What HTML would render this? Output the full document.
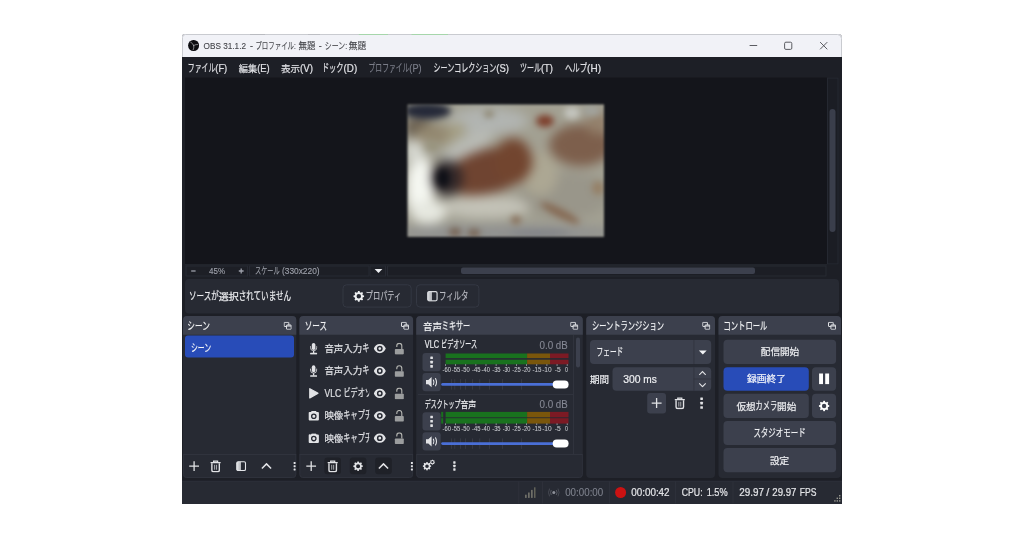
<!DOCTYPE html>
<html lang="ja"><head><meta charset="utf-8"><title>OBS 31.1.2</title>
<style>html,body{margin:0;padding:0;background:#fff;}body{width:1024px;height:538px;overflow:hidden;}svg.root{display:block;filter:blur(0.4px);font-family:'Liberation Sans','Noto Sans CJK JP',sans-serif;white-space:pre;}</style></head>
<body>
<svg class="root" width="1024" height="538" viewBox="0 0 1024 538">
<path d="M185 34H838A4 4 0 0 1 842 38V504H182V37A3 3 0 0 1 185 34Z" fill="#1d1f26"/>
<path d="M185 34H838A4 4 0 0 1 842 38V57H182V37A3 3 0 0 1 185 34Z" fill="#f1f2f7"/>
<path d="M182.5 57V37.5A3 3 0 0 1 185.5 34.5H837.5A4 4 0 0 1 841.5 38.5V57" fill="none" stroke="#c9cbd0"/>
<rect x="358.8" y="34" width="29.2" height="1" fill="#a6d6ab"/>
<rect x="411.5" y="34" width="36.5" height="1" fill="#a6d6ab"/>
<rect x="250" y="34" width="15" height="1" fill="#b9bbc0"/>
<rect x="308" y="34" width="12" height="1" fill="#bcbec3"/>
<svg x="188" y="39.9" width="11.2" height="11.2" viewBox="0 0 12 12"><circle cx="6" cy="6" r="5.9" fill="#0d0d10"/>
<g fill="none" stroke="#a9abae" stroke-width="1.05" stroke-linecap="round" stroke-opacity="0.85">
<path d="M6.1 6.2C5.4 4.6 4.6 3.4 3 2.6"/>
<path d="M6.1 6.2C7.4 5.2 8.6 4.9 10.2 5"/>
<path d="M6.1 6.2C6.4 7.8 6.2 9 5.6 10.4"/>
</g></svg>
<svg x="745" y="38" width="90" height="15" viewBox="0 0 90 15"><g fill="none" stroke="#4a4b50" stroke-width="0.9">
<path d="M4.6 7.5H12.2"/>
<rect x="39.6" y="4.2" width="7.2" height="7.2" rx="1.3"/>
<path d="M75.1 4.1L82.3 11.3M82.3 4.1L75.1 11.3"/>
</g></svg>
<rect x="185" y="77.6" width="642" height="186.8" fill="#14151b"/>
<svg x="401" y="98" width="210" height="146" viewBox="0 0 210 146"><defs><filter id="bl" color-interpolation-filters="sRGB" x="-30%" y="-30%" width="160%" height="160%"><feGaussianBlur stdDeviation="5.5"/></filter><filter id="bs" color-interpolation-filters="sRGB" x="-30%" y="-30%" width="160%" height="160%"><feGaussianBlur stdDeviation="3"/></filter><filter id="be" color-interpolation-filters="sRGB" x="-10%" y="-10%" width="120%" height="120%"><feGaussianBlur stdDeviation="1.2"/></filter><clipPath id="cp"><rect x="6.6" y="6.6" width="196.4" height="132.2"/></clipPath></defs><g filter="url(#be)"><g clip-path="url(#cp)"><rect x="0" y="0" width="210" height="146" fill="#a3a193"/><g filter="url(#bl)"><ellipse cx="104" cy="135" rx="120" ry="8" fill="#8f9090"/><ellipse cx="164" cy="97" rx="45" ry="24" fill="#99968a"/><ellipse cx="87" cy="23" rx="40" ry="13" fill="#b1b4b1"/><ellipse cx="67" cy="48" rx="28" ry="10" fill="#b8bab4" transform="rotate(-28 67 48)"/><ellipse cx="48" cy="36" rx="18" ry="8" fill="#a49e83" transform="rotate(-30 48 36)"/><ellipse cx="139" cy="76" rx="18" ry="22" fill="#aca793"/><ellipse cx="84" cy="109" rx="45" ry="11" fill="#c3c2b7"/><ellipse cx="19" cy="90" rx="14" ry="34" fill="#f5f7f1"/><ellipse cx="13" cy="54" rx="9" ry="14" fill="#d6d8d1"/><ellipse cx="27" cy="114" rx="18" ry="12" fill="#e6e8e0"/><ellipse cx="180" cy="47" rx="32" ry="21" fill="#7d5f4c"/><ellipse cx="197" cy="24" rx="12" ry="12" fill="#94816c"/><ellipse cx="88" cy="73" rx="45" ry="22" fill="#6f4431" transform="rotate(-15 88 73)"/><ellipse cx="112" cy="63" rx="19" ry="23" fill="#72452f"/><ellipse cx="18" cy="30" rx="14" ry="12" fill="#655a4c"/><ellipse cx="31" cy="36" rx="18" ry="10" fill="#938870"/><ellipse cx="46" cy="80" rx="16" ry="18" fill="#2b2528" fill-opacity="0.9"/></g><g filter="url(#bs)"><ellipse cx="26" cy="13" rx="24" ry="8" fill="#252938"/><ellipse cx="42" cy="80" rx="7" ry="10" fill="#0f1017"/><ellipse cx="144" cy="23" rx="9" ry="6" fill="#7c3d2a"/><ellipse cx="171" cy="15" rx="8" ry="6" fill="#c6c7c1"/><ellipse cx="191" cy="13" rx="9" ry="5" fill="#a2a49f"/><ellipse cx="88" cy="16" rx="5" ry="3.5" fill="#8a816b"/><ellipse cx="159" cy="115" rx="22" ry="4.5" fill="#866a54" transform="rotate(27 159 115)"/><ellipse cx="115" cy="122" rx="5" ry="4" fill="#856b54"/><ellipse cx="197" cy="90" rx="6" ry="7" fill="#958066"/><ellipse cx="54" cy="134" rx="6" ry="4" fill="#745d4c"/><ellipse cx="73" cy="135" rx="6" ry="4" fill="#77614f"/><ellipse cx="31" cy="48" rx="6" ry="5" fill="#98947e"/><ellipse cx="139" cy="135" rx="30" ry="3" fill="#808287"/></g></g></g></svg>
<rect x="827" y="77.6" width="11.5" height="186.8" fill="#1b1d24"/>
<rect x="827.5" y="78.1" width="10.5" height="185.8" fill="none" stroke="#252831"/>
<rect x="829.5" y="109" width="6" height="123" rx="3" fill="#3a3e4b"/>
<rect x="185" y="264.4" width="642" height="12.6" fill="#1d1f26"/>
<rect x="185" y="264.4" width="642" height="1" fill="#272a33"/>
<rect x="185.5" y="265.5" width="62.5" height="11" fill="#1d1f26"/>
<rect x="186" y="266" width="61.5" height="10" fill="none" stroke="#272a33"/>
<rect x="249" y="265.5" width="120.5" height="11" fill="#1d1f26"/>
<rect x="249.5" y="266" width="119.5" height="10" fill="none" stroke="#272a33"/>
<rect x="369.5" y="265.5" width="16.5" height="11" fill="#1d1f26"/>
<rect x="370" y="266" width="15.5" height="10" fill="none" stroke="#272a33"/>
<rect x="387" y="265.5" width="439.5" height="11" fill="#1c1e25"/>
<rect x="387.5" y="266" width="438.5" height="10" fill="none" stroke="#272a33"/>
<rect x="461" y="267.5" width="294" height="6.5" rx="2" fill="#3c404d"/>
<svg x="189" y="266" width="60" height="10" viewBox="0 0 60 10"><g stroke="#9da0aa" stroke-width="1.3" fill="none"><path d="M2.2 5H6.6"/><path d="M49.8 5H54.6M52.2 2.6V7.4"/></g></svg>
<svg x="374" y="268.3" width="9" height="6" viewBox="0 0 9 6"><path d="M0.6 0.8H8.4L4.5 4.8Z" fill="#eef0f3"/></svg>
<rect x="185" y="279" width="654" height="34.5" rx="4" fill="#272a33"/>
<rect x="342.5" y="284.3" width="69.2" height="23.3" rx="4" fill="#272a33"/>
<rect x="343" y="284.8" width="68.2" height="22.3" rx="3.5" fill="none" stroke="#343843"/>
<rect x="416" y="284.3" width="63.4" height="23.3" rx="4" fill="#272a33"/>
<rect x="416.5" y="284.8" width="62.4" height="22.3" rx="3.5" fill="none" stroke="#343843"/>
<svg x="353" y="290.5" width="11.6" height="11.6" viewBox="0 0 16 16"><path fill="#eef0f2" fill-rule="evenodd" d="M6.9 0.6h2.2l.35 1.75a5.8 5.8 0 0 1 1.45.6l1.5-1 1.55 1.55-1 1.5c.26.45.47.94.6 1.45l1.75.35v2.2l-1.75.35a5.8 5.8 0 0 1-.6 1.45l1 1.5-1.55 1.55-1.5-1c-.45.26-.94.47-1.45.6L9.1 15.4H6.9l-.35-1.75a5.8 5.8 0 0 1-1.45-.6l-1.5 1-1.55-1.55 1-1.5a5.8 5.8 0 0 1-.6-1.45L.7 9.1V6.9l1.75-.35c.13-.51.34-1 .6-1.45l-1-1.5L3.6 2.05l1.5 1c.45-.26.94-.47 1.45-.6Z M8 4.9a3.1 3.1 0 1 0 0 6.2 3.1 3.1 0 0 0 0-6.2Z"/></svg>
<svg x="426.8" y="290.6" width="11.2" height="11.2" viewBox="0 0 12 12"><defs><linearGradient id="fg1" x1="0" x2="1"><stop offset="0" stop-color="#d9dbdf"/><stop offset="0.45" stop-color="#d9dbdf" stop-opacity="0.75"/><stop offset="0.5" stop-color="#d9dbdf" stop-opacity="0"/></linearGradient></defs>
<rect x="1" y="1" width="10" height="10" rx="1.6" fill="url(#fg1)"/><rect x="1" y="1" width="10" height="10" rx="1.6" fill="none" stroke="#d9dbdf" stroke-width="1.3"/></svg>
<rect x="183" y="316" width="113.3" height="162" rx="4" fill="#272a33"/>
<path d="M187 316H292.3A4 4 0 0 1 296.3 320V334.7H183V320A4 4 0 0 1 187 316Z" fill="#3c404d"/>
<svg x="283.6" y="321.8" width="8.1" height="8" viewBox="0 0 8.1 8"><g fill="none" stroke="#e6e8eb" stroke-width="0.95"><rect x="0.5" y="0.5" width="4.7" height="4.2" rx="0.4"/><rect x="2.9" y="3.2" width="4.7" height="4.3" rx="0.4" fill="#3c404d"/><path d="M2.9 4.2H7.6" stroke-width="1.1"/></g></svg>
<rect x="299.4" y="316" width="113.7" height="162" rx="4" fill="#272a33"/>
<path d="M303.4 316H409.1A4 4 0 0 1 413.1 320V334.7H299.4V320A4 4 0 0 1 303.4 316Z" fill="#3c404d"/>
<svg x="401" y="321.8" width="8.1" height="8" viewBox="0 0 8.1 8"><g fill="none" stroke="#e6e8eb" stroke-width="0.95"><rect x="0.5" y="0.5" width="4.7" height="4.2" rx="0.4"/><rect x="2.9" y="3.2" width="4.7" height="4.3" rx="0.4" fill="#3c404d"/><path d="M2.9 4.2H7.6" stroke-width="1.1"/></g></svg>
<rect x="416.2" y="316" width="166.6" height="162" rx="4" fill="#272a33"/>
<path d="M420.2 316H578.8A4 4 0 0 1 582.8 320V334.7H416.2V320A4 4 0 0 1 420.2 316Z" fill="#3c404d"/>
<svg x="570.2" y="321.8" width="8.1" height="8" viewBox="0 0 8.1 8"><g fill="none" stroke="#e6e8eb" stroke-width="0.95"><rect x="0.5" y="0.5" width="4.7" height="4.2" rx="0.4"/><rect x="2.9" y="3.2" width="4.7" height="4.3" rx="0.4" fill="#3c404d"/><path d="M2.9 4.2H7.6" stroke-width="1.1"/></g></svg>
<rect x="586.2" y="316" width="128.8" height="162" rx="4" fill="#272a33"/>
<path d="M590.2 316H711A4 4 0 0 1 715 320V334.7H586.2V320A4 4 0 0 1 590.2 316Z" fill="#3c404d"/>
<svg x="702.2" y="321.8" width="8.1" height="8" viewBox="0 0 8.1 8"><g fill="none" stroke="#e6e8eb" stroke-width="0.95"><rect x="0.5" y="0.5" width="4.7" height="4.2" rx="0.4"/><rect x="2.9" y="3.2" width="4.7" height="4.3" rx="0.4" fill="#3c404d"/><path d="M2.9 4.2H7.6" stroke-width="1.1"/></g></svg>
<rect x="718.5" y="316" width="122.5" height="162" rx="4" fill="#272a33"/>
<path d="M722.5 316H837A4 4 0 0 1 841 320V334.7H718.5V320A4 4 0 0 1 722.5 316Z" fill="#3c404d"/>
<svg x="828" y="321.8" width="8.1" height="8" viewBox="0 0 8.1 8"><g fill="none" stroke="#e6e8eb" stroke-width="0.95"><rect x="0.5" y="0.5" width="4.7" height="4.2" rx="0.4"/><rect x="2.9" y="3.2" width="4.7" height="4.3" rx="0.4" fill="#3c404d"/><path d="M2.9 4.2H7.6" stroke-width="1.1"/></g></svg>
<rect x="185" y="335.6" width="109" height="22" rx="3" fill="#284cb8"/>
<rect x="183" y="454" width="113.3" height="1" fill="#30333d"/>
<path d="M183.5 455V474.5A3 3 0 0 0 186.5 477.5H292.8A3 3 0 0 0 295.8 474.5V455" fill="none" stroke="#2e313b"/>
<path d="M299.9 455V474.5A3 3 0 0 0 302.9 477.5H409.6A3 3 0 0 0 412.6 474.5V455" fill="none" stroke="#2e313b"/>
<path d="M416.7 455V474.5A3 3 0 0 0 419.7 477.5H579.3A3 3 0 0 0 582.3 474.5V455" fill="none" stroke="#2e313b"/>
<svg x="188.8" y="460.9" width="10.6" height="10.6" viewBox="0 0 10.6 10.6"><path d="M5.3 0.4V10.2M0.4 5.3H10.2" stroke="#e2e3e6" stroke-width="1.3" fill="none"/></svg>
<svg x="209.7" y="459.9" width="11.8" height="12.8" viewBox="0 0 11 12"><g fill="none" stroke="#e2e3e6"><path d="M0.8 2.6H10.2" stroke-width="1.3"/><path d="M3.6 2.2V1.2H7.4V2.2" stroke-width="1.1"/><path d="M2 3.2V9.6Q2 11 3.4 11H7.6Q9 11 9 9.6V3.2" stroke-width="1.3"/><path d="M4.6 4.6V9.2M6.4 4.6V9.2" stroke-width="0.9" stroke-opacity="0.75"/></g></svg>
<svg x="235.9" y="460.9" width="10.5" height="10.5" viewBox="0 0 12 12"><defs><linearGradient id="fg2" x1="0" x2="1"><stop offset="0" stop-color="#e3e5e8"/><stop offset="0.45" stop-color="#e3e5e8" stop-opacity="0.75"/><stop offset="0.5" stop-color="#e3e5e8" stop-opacity="0"/></linearGradient></defs>
<rect x="1" y="1" width="10" height="10" rx="1.6" fill="url(#fg2)"/><rect x="1" y="1" width="10" height="10" rx="1.6" fill="none" stroke="#e3e5e8" stroke-width="1.3"/></svg>
<svg x="261" y="462.7" width="11" height="7" viewBox="0 0 11 7"><path d="M0.9 5.8L5.5 1.2L10.1 5.8" stroke="#e2e3e6" stroke-width="1.5" fill="none"/></svg>
<svg x="292.6" y="460.9" width="4" height="10.6" viewBox="0 0 4 10.6"><g fill="#e2e3e6"><rect x="1.0" y="1.0" width="2.0" height="2.0" rx="0.4"/><rect x="1.0" y="4.3" width="2.0" height="2.0" rx="0.4"/><rect x="1.0" y="7.6" width="2.0" height="2.0" rx="0.4"/></g></svg>
<rect x="299.4" y="454" width="113.7" height="1" fill="#30333d"/>
<svg x="309.6" y="342.5" width="8" height="12.3" viewBox="0 0 8 12"><rect x="2.2" y="0.3" width="3.6" height="7" rx="1.8" fill="#e2e3e6"/><path d="M0.9 3.6V5a3.1 3.1 0 0 0 6.2 0V3.6" fill="none" stroke="#e2e3e6" stroke-width="0.9" stroke-opacity="0.9"/><path d="M4 8.2V10.4" stroke="#e2e3e6" stroke-width="1.3"/><rect x="0.6" y="10.2" width="6.8" height="1.6" rx="0.3" fill="#e2e3e6"/></svg>
<svg x="373.6" y="343.5" width="12.4" height="10.2" viewBox="0 0 12.4 10.2"><path fill="#e2e3e6" fill-rule="evenodd" d="M6.2 0.5C3.3 0.5 1.2 2.6 0.2 5.1 1.2 7.6 3.3 9.7 6.2 9.7S11.2 7.6 12.2 5.1C11.2 2.6 9.1 0.5 6.2 0.5Z M6.2 2.2a2.9 2.9 0 1 0 0 5.8 2.9 2.9 0 0 0 0-5.8Z M6.2 3.7a1.4 1.4 0 1 1 0 2.8 1.4 1.4 0 0 1 0-2.8Z"/></svg>
<svg x="394.3" y="342.7" width="10" height="12" viewBox="0 0 10 12"><g><path d="M2.5 4.2V3.1a2.5 2.5 0 0 1 5 0V6.3" fill="none" stroke="#b3b4b0" stroke-width="1.15"/><rect x="0.5" y="6.2" width="9" height="5.5" rx="0.8" fill="#9b9d9e"/></g></svg>
<svg x="309.6" y="364.9" width="8" height="12.3" viewBox="0 0 8 12"><rect x="2.2" y="0.3" width="3.6" height="7" rx="1.8" fill="#e2e3e6"/><path d="M0.9 3.6V5a3.1 3.1 0 0 0 6.2 0V3.6" fill="none" stroke="#e2e3e6" stroke-width="0.9" stroke-opacity="0.9"/><path d="M4 8.2V10.4" stroke="#e2e3e6" stroke-width="1.3"/><rect x="0.6" y="10.2" width="6.8" height="1.6" rx="0.3" fill="#e2e3e6"/></svg>
<svg x="373.6" y="365.9" width="12.4" height="10.2" viewBox="0 0 12.4 10.2"><path fill="#e2e3e6" fill-rule="evenodd" d="M6.2 0.5C3.3 0.5 1.2 2.6 0.2 5.1 1.2 7.6 3.3 9.7 6.2 9.7S11.2 7.6 12.2 5.1C11.2 2.6 9.1 0.5 6.2 0.5Z M6.2 2.2a2.9 2.9 0 1 0 0 5.8 2.9 2.9 0 0 0 0-5.8Z M6.2 3.7a1.4 1.4 0 1 1 0 2.8 1.4 1.4 0 0 1 0-2.8Z"/></svg>
<svg x="394.3" y="365.1" width="10" height="12" viewBox="0 0 10 12"><g><path d="M2.5 4.2V3.1a2.5 2.5 0 0 1 5 0V6.3" fill="none" stroke="#b3b4b0" stroke-width="1.15"/><rect x="0.5" y="6.2" width="9" height="5.5" rx="0.8" fill="#9b9d9e"/></g></svg>
<svg x="308.8" y="387.7" width="10" height="11.2" viewBox="0 0 10 11.2"><path d="M1 1L9.3 5.6L1 10.2Z" fill="#e2e3e6" stroke="#e2e3e6" stroke-width="1.3" stroke-linejoin="round"/></svg>
<svg x="373.6" y="388.3" width="12.4" height="10.2" viewBox="0 0 12.4 10.2"><path fill="#e2e3e6" fill-rule="evenodd" d="M6.2 0.5C3.3 0.5 1.2 2.6 0.2 5.1 1.2 7.6 3.3 9.7 6.2 9.7S11.2 7.6 12.2 5.1C11.2 2.6 9.1 0.5 6.2 0.5Z M6.2 2.2a2.9 2.9 0 1 0 0 5.8 2.9 2.9 0 0 0 0-5.8Z M6.2 3.7a1.4 1.4 0 1 1 0 2.8 1.4 1.4 0 0 1 0-2.8Z"/></svg>
<svg x="394.3" y="387.5" width="10" height="12" viewBox="0 0 10 12"><g><path d="M2.5 4.2V3.1a2.5 2.5 0 0 1 5 0V6.3" fill="none" stroke="#b3b4b0" stroke-width="1.15"/><rect x="0.5" y="6.2" width="9" height="5.5" rx="0.8" fill="#9b9d9e"/></g></svg>
<svg x="307.8" y="411" width="12" height="10" viewBox="0 0 12 10"><path fill="#e2e3e6" fill-rule="evenodd" d="M3.2 1.1L4 -0.2h4l.8 1.3H10.2a.9.9 0 0 1 .9.9V8.6a.9.9 0 0 1-.9.9H1.8a.9.9 0 0 1-.9-.9V1.8a.9.9 0 0 1 .9-.9Z M6 2.4a2.8 2.8 0 1 0 0 5.6 2.8 2.8 0 0 0 0-5.6Z M6 3.7a1.5 1.5 0 1 1 0 3 1.5 1.5 0 0 1 0-3Z"/></svg>
<svg x="373.6" y="410.7" width="12.4" height="10.2" viewBox="0 0 12.4 10.2"><path fill="#e2e3e6" fill-rule="evenodd" d="M6.2 0.5C3.3 0.5 1.2 2.6 0.2 5.1 1.2 7.6 3.3 9.7 6.2 9.7S11.2 7.6 12.2 5.1C11.2 2.6 9.1 0.5 6.2 0.5Z M6.2 2.2a2.9 2.9 0 1 0 0 5.8 2.9 2.9 0 0 0 0-5.8Z M6.2 3.7a1.4 1.4 0 1 1 0 2.8 1.4 1.4 0 0 1 0-2.8Z"/></svg>
<svg x="394.3" y="409.9" width="10" height="12" viewBox="0 0 10 12"><g><path d="M2.5 4.2V3.1a2.5 2.5 0 0 1 5 0V6.3" fill="none" stroke="#b3b4b0" stroke-width="1.15"/><rect x="0.5" y="6.2" width="9" height="5.5" rx="0.8" fill="#9b9d9e"/></g></svg>
<svg x="307.8" y="433.4" width="12" height="10" viewBox="0 0 12 10"><path fill="#e2e3e6" fill-rule="evenodd" d="M3.2 1.1L4 -0.2h4l.8 1.3H10.2a.9.9 0 0 1 .9.9V8.6a.9.9 0 0 1-.9.9H1.8a.9.9 0 0 1-.9-.9V1.8a.9.9 0 0 1 .9-.9Z M6 2.4a2.8 2.8 0 1 0 0 5.6 2.8 2.8 0 0 0 0-5.6Z M6 3.7a1.5 1.5 0 1 1 0 3 1.5 1.5 0 0 1 0-3Z"/></svg>
<svg x="373.6" y="433.1" width="12.4" height="10.2" viewBox="0 0 12.4 10.2"><path fill="#e2e3e6" fill-rule="evenodd" d="M6.2 0.5C3.3 0.5 1.2 2.6 0.2 5.1 1.2 7.6 3.3 9.7 6.2 9.7S11.2 7.6 12.2 5.1C11.2 2.6 9.1 0.5 6.2 0.5Z M6.2 2.2a2.9 2.9 0 1 0 0 5.8 2.9 2.9 0 0 0 0-5.8Z M6.2 3.7a1.4 1.4 0 1 1 0 2.8 1.4 1.4 0 0 1 0-2.8Z"/></svg>
<svg x="394.3" y="432.3" width="10" height="12" viewBox="0 0 10 12"><g><path d="M2.5 4.2V3.1a2.5 2.5 0 0 1 5 0V6.3" fill="none" stroke="#b3b4b0" stroke-width="1.15"/><rect x="0.5" y="6.2" width="9" height="5.5" rx="0.8" fill="#9b9d9e"/></g></svg>
<rect x="324.4" y="457.6" width="16.6" height="16.6" rx="3" fill="#1f2128"/>
<rect x="349.8" y="457.6" width="16.6" height="16.6" rx="3" fill="#1f2128"/>
<rect x="375.2" y="457.6" width="16.6" height="16.6" rx="3" fill="#1f2128"/>
<svg x="305.9" y="460.9" width="10.6" height="10.6" viewBox="0 0 10.6 10.6"><path d="M5.3 0.4V10.2M0.4 5.3H10.2" stroke="#e2e3e6" stroke-width="1.3" fill="none"/></svg>
<svg x="326.8" y="459.9" width="11.8" height="12.8" viewBox="0 0 11 12"><g fill="none" stroke="#e2e3e6"><path d="M0.8 2.6H10.2" stroke-width="1.3"/><path d="M3.6 2.2V1.2H7.4V2.2" stroke-width="1.1"/><path d="M2 3.2V9.6Q2 11 3.4 11H7.6Q9 11 9 9.6V3.2" stroke-width="1.3"/><path d="M4.6 4.6V9.2M6.4 4.6V9.2" stroke-width="0.9" stroke-opacity="0.75"/></g></svg>
<svg x="352.9" y="461" width="10.4" height="10.4" viewBox="0 0 16 16"><path fill="#e2e3e6" fill-rule="evenodd" d="M6.9 0.6h2.2l.35 1.75a5.8 5.8 0 0 1 1.45.6l1.5-1 1.55 1.55-1 1.5c.26.45.47.94.6 1.45l1.75.35v2.2l-1.75.35a5.8 5.8 0 0 1-.6 1.45l1 1.5-1.55 1.55-1.5-1c-.45.26-.94.47-1.45.6L9.1 15.4H6.9l-.35-1.75a5.8 5.8 0 0 1-1.45-.6l-1.5 1-1.55-1.55 1-1.5a5.8 5.8 0 0 1-.6-1.45L.7 9.1V6.9l1.75-.35c.13-.51.34-1 .6-1.45l-1-1.5L3.6 2.05l1.5 1c.45-.26.94-.47 1.45-.6Z M8 4.9a3.1 3.1 0 1 0 0 6.2 3.1 3.1 0 0 0 0-6.2Z"/></svg>
<svg x="378" y="462.7" width="11" height="7" viewBox="0 0 11 7"><path d="M0.9 5.8L5.5 1.2L10.1 5.8" stroke="#e2e3e6" stroke-width="1.5" fill="none"/></svg>
<svg x="409.9" y="460.9" width="4" height="10.6" viewBox="0 0 4 10.6"><g fill="#e2e3e6"><rect x="1.0" y="1.0" width="2.0" height="2.0" rx="0.4"/><rect x="1.0" y="4.3" width="2.0" height="2.0" rx="0.4"/><rect x="1.0" y="7.6" width="2.0" height="2.0" rx="0.4"/></g></svg>
<rect x="418" y="394" width="156" height="1" fill="#30333d"/>
<rect x="573" y="335" width="1" height="119" fill="#30333d"/>
<rect x="445.6" y="353.5" width="81.5" height="4.6" fill="#19721e"/>
<rect x="527.1" y="353.5" width="22.9" height="4.6" fill="#7a560b"/>
<rect x="550" y="353.5" width="18.5" height="4.6" fill="#7c1a24"/>
<rect x="445.6" y="359.7" width="81.5" height="4.6" fill="#19721e"/>
<rect x="527.1" y="359.7" width="22.9" height="4.6" fill="#7a560b"/>
<rect x="550" y="359.7" width="18.5" height="4.6" fill="#7c1a24"/>
<rect x="445" y="364.2" width="0.8" height="1.7" fill="#a9abb2"/>
<rect x="455.15" y="364.2" width="0.8" height="1.7" fill="#a9abb2"/>
<rect x="465.3" y="364.2" width="0.8" height="1.7" fill="#a9abb2"/>
<rect x="475.45" y="364.2" width="0.8" height="1.7" fill="#a9abb2"/>
<rect x="485.6" y="364.2" width="0.8" height="1.7" fill="#a9abb2"/>
<rect x="495.75" y="364.2" width="0.8" height="1.7" fill="#a9abb2"/>
<rect x="505.9" y="364.2" width="0.8" height="1.7" fill="#a9abb2"/>
<rect x="516.05" y="364.2" width="0.8" height="1.7" fill="#a9abb2"/>
<rect x="526.2" y="364.2" width="0.8" height="1.7" fill="#a9abb2"/>
<rect x="536.35" y="364.2" width="0.8" height="1.7" fill="#a9abb2"/>
<rect x="546.5" y="364.2" width="0.8" height="1.7" fill="#a9abb2"/>
<rect x="556.65" y="364.2" width="0.8" height="1.7" fill="#a9abb2"/>
<rect x="566.8" y="364.2" width="0.8" height="1.7" fill="#a9abb2"/>
<rect x="422.5" y="353" width="18.2" height="18.2" rx="3" fill="#3c404d"/>
<svg x="429.6" y="355.8" width="4" height="12.6" viewBox="0 0 4 12.6"><g fill="#e2e3e6"><rect x="0.7" y="0.7" width="2.6" height="2.6" rx="0.4"/><rect x="0.7" y="5.0" width="2.6" height="2.6" rx="0.4"/><rect x="0.7" y="9.299999999999999" width="2.6" height="2.6" rx="0.4"/></g></svg>
<rect x="422.5" y="373" width="18.2" height="18.2" rx="3" fill="#3c404d"/>
<svg x="425.4" y="376.2" width="12.4" height="12" viewBox="0 0 12 12"><g fill="#e2e3e6"><path d="M0.4 3.9H2.7L6 0.9V11.1L2.7 8.1H0.4Z"/></g><g fill="none" stroke="#e2e3e6" stroke-width="1.1" stroke-linecap="round"><path d="M7.8 3.8Q9 6 7.8 8.2"/><path d="M9.9 2.4Q11.9 6 9.9 9.6"/></g></svg>
<rect x="451.2" y="379.2" width="0.8" height="10.4" fill="#3b3e48"/>
<rect x="454.4" y="379.2" width="0.8" height="10.4" fill="#3b3e48"/>
<rect x="460" y="379.2" width="0.8" height="10.4" fill="#3b3e48"/>
<rect x="465.2" y="379.2" width="0.8" height="10.4" fill="#3b3e48"/>
<rect x="472.1" y="379.2" width="0.8" height="10.4" fill="#3b3e48"/>
<rect x="479.4" y="379.2" width="0.8" height="10.4" fill="#3b3e48"/>
<rect x="489.2" y="379.2" width="0.8" height="10.4" fill="#3b3e48"/>
<rect x="502.1" y="379.2" width="0.8" height="10.4" fill="#3b3e48"/>
<rect x="521.2" y="379.2" width="0.8" height="10.4" fill="#3b3e48"/>
<rect x="441.2" y="383" width="118.8" height="2.8" rx="1.4" fill="#4a6fd6"/>
<rect x="552.7" y="380.4" width="15.9" height="8" rx="4" fill="#ffffff"/>
<rect x="445.6" y="411.9" width="81.5" height="5.4" fill="#19721e"/>
<rect x="527.1" y="411.9" width="22.9" height="5.4" fill="#7a560b"/>
<rect x="550" y="411.9" width="18.5" height="5.4" fill="#7c1a24"/>
<rect x="441.2" y="411.9" width="2" height="5.4" fill="#19721e"/>
<rect x="445.6" y="418.2" width="81.5" height="5.4" fill="#19721e"/>
<rect x="527.1" y="418.2" width="22.9" height="5.4" fill="#7a560b"/>
<rect x="550" y="418.2" width="18.5" height="5.4" fill="#7c1a24"/>
<rect x="441.2" y="418.2" width="2" height="5.4" fill="#19721e"/>
<rect x="445" y="423.4" width="0.8" height="1.7" fill="#a9abb2"/>
<rect x="455.15" y="423.4" width="0.8" height="1.7" fill="#a9abb2"/>
<rect x="465.3" y="423.4" width="0.8" height="1.7" fill="#a9abb2"/>
<rect x="475.45" y="423.4" width="0.8" height="1.7" fill="#a9abb2"/>
<rect x="485.6" y="423.4" width="0.8" height="1.7" fill="#a9abb2"/>
<rect x="495.75" y="423.4" width="0.8" height="1.7" fill="#a9abb2"/>
<rect x="505.9" y="423.4" width="0.8" height="1.7" fill="#a9abb2"/>
<rect x="516.05" y="423.4" width="0.8" height="1.7" fill="#a9abb2"/>
<rect x="526.2" y="423.4" width="0.8" height="1.7" fill="#a9abb2"/>
<rect x="536.35" y="423.4" width="0.8" height="1.7" fill="#a9abb2"/>
<rect x="546.5" y="423.4" width="0.8" height="1.7" fill="#a9abb2"/>
<rect x="556.65" y="423.4" width="0.8" height="1.7" fill="#a9abb2"/>
<rect x="566.8" y="423.4" width="0.8" height="1.7" fill="#a9abb2"/>
<rect x="422.5" y="412.2" width="18.2" height="18.2" rx="3" fill="#3c404d"/>
<svg x="429.6" y="415" width="4" height="12.6" viewBox="0 0 4 12.6"><g fill="#e2e3e6"><rect x="0.7" y="0.7" width="2.6" height="2.6" rx="0.4"/><rect x="0.7" y="5.0" width="2.6" height="2.6" rx="0.4"/><rect x="0.7" y="9.299999999999999" width="2.6" height="2.6" rx="0.4"/></g></svg>
<rect x="422.5" y="432.2" width="18.2" height="18.2" rx="3" fill="#3c404d"/>
<svg x="425.4" y="435.4" width="12.4" height="12" viewBox="0 0 12 12"><g fill="#e2e3e6"><path d="M0.4 3.9H2.7L6 0.9V11.1L2.7 8.1H0.4Z"/></g><g fill="none" stroke="#e2e3e6" stroke-width="1.1" stroke-linecap="round"><path d="M7.8 3.8Q9 6 7.8 8.2"/><path d="M9.9 2.4Q11.9 6 9.9 9.6"/></g></svg>
<rect x="451.2" y="438.4" width="0.8" height="10.4" fill="#3b3e48"/>
<rect x="454.4" y="438.4" width="0.8" height="10.4" fill="#3b3e48"/>
<rect x="460" y="438.4" width="0.8" height="10.4" fill="#3b3e48"/>
<rect x="465.2" y="438.4" width="0.8" height="10.4" fill="#3b3e48"/>
<rect x="472.1" y="438.4" width="0.8" height="10.4" fill="#3b3e48"/>
<rect x="479.4" y="438.4" width="0.8" height="10.4" fill="#3b3e48"/>
<rect x="489.2" y="438.4" width="0.8" height="10.4" fill="#3b3e48"/>
<rect x="502.1" y="438.4" width="0.8" height="10.4" fill="#3b3e48"/>
<rect x="521.2" y="438.4" width="0.8" height="10.4" fill="#3b3e48"/>
<rect x="441.2" y="442.2" width="118.8" height="2.8" rx="1.4" fill="#4a6fd6"/>
<rect x="552.7" y="439.6" width="15.9" height="8" rx="4" fill="#ffffff"/>
<rect x="576" y="337.5" width="4" height="30" rx="2" fill="#3c404d"/>
<rect x="416.2" y="454" width="166.6" height="1" fill="#30333d"/>
<svg x="422.4" y="461.6" width="9.2" height="9.2" viewBox="0 0 16 16"><path fill="#e2e3e6" fill-rule="evenodd" d="M6.9 0.6h2.2l.35 1.75a5.8 5.8 0 0 1 1.45.6l1.5-1 1.55 1.55-1 1.5c.26.45.47.94.6 1.45l1.75.35v2.2l-1.75.35a5.8 5.8 0 0 1-.6 1.45l1 1.5-1.55 1.55-1.5-1c-.45.26-.94.47-1.45.6L9.1 15.4H6.9l-.35-1.75a5.8 5.8 0 0 1-1.45-.6l-1.5 1-1.55-1.55 1-1.5a5.8 5.8 0 0 1-.6-1.45L.7 9.1V6.9l1.75-.35c.13-.51.34-1 .6-1.45l-1-1.5L3.6 2.05l1.5 1c.45-.26.94-.47 1.45-.6Z M8 4.9a3.1 3.1 0 1 0 0 6.2 3.1 3.1 0 0 0 0-6.2Z"/></svg>
<svg x="429.6" y="459.4" width="5.6" height="5.6" viewBox="0 0 16 16"><path fill="#e2e3e6" fill-rule="evenodd" d="M6.9 0.6h2.2l.35 1.75a5.8 5.8 0 0 1 1.45.6l1.5-1 1.55 1.55-1 1.5c.26.45.47.94.6 1.45l1.75.35v2.2l-1.75.35a5.8 5.8 0 0 1-.6 1.45l1 1.5-1.55 1.55-1.5-1c-.45.26-.94.47-1.45.6L9.1 15.4H6.9l-.35-1.75a5.8 5.8 0 0 1-1.45-.6l-1.5 1-1.55-1.55 1-1.5a5.8 5.8 0 0 1-.6-1.45L.7 9.1V6.9l1.75-.35c.13-.51.34-1 .6-1.45l-1-1.5L3.6 2.05l1.5 1c.45-.26.94-.47 1.45-.6Z M8 4.9a3.1 3.1 0 1 0 0 6.2 3.1 3.1 0 0 0 0-6.2Z"/></svg>
<svg x="452.4" y="460.5" width="4" height="11" viewBox="0 0 4 11"><g fill="#e2e3e6"><rect x="0.8500000000000001" y="0.8500000000000001" width="2.3" height="2.3" rx="0.4"/><rect x="0.8500000000000001" y="4.35" width="2.3" height="2.3" rx="0.4"/><rect x="0.8500000000000001" y="7.85" width="2.3" height="2.3" rx="0.4"/></g></svg>
<rect x="590" y="340" width="121.2" height="24.1" rx="4" fill="#3c404d"/>
<rect x="693.5" y="340" width="0.8" height="24.1" fill="#30333e"/>
<svg x="698.3" y="349.6" width="9" height="6" viewBox="0 0 9 6"><path d="M0.6 0.8H8.4L4.5 4.8Z" fill="#f2f3f5"/></svg>
<rect x="612.5" y="367.2" width="98.7" height="23.5" rx="4" fill="#3c404d"/>
<rect x="693.5" y="367.2" width="0.8" height="23.5" fill="#30333e"/>
<rect x="693.5" y="378.6" width="17.7" height="0.8" fill="#30333e"/>
<svg x="698.5" y="370.6" width="8" height="5" viewBox="0 0 8 5"><path d="M0.8 4.2L4 1L7.2 4.2" fill="none" stroke="#e2e3e6" stroke-width="1.1"/></svg>
<svg x="698.5" y="382.6" width="8" height="5" viewBox="0 0 8 5"><path d="M0.8 0.8L4 4L7.2 0.8" fill="none" stroke="#e2e3e6" stroke-width="1.1"/></svg>
<rect x="647.2" y="393" width="18.8" height="20.5" rx="3" fill="#3c404d"/>
<svg x="651.2" y="397.7" width="10.8" height="10.8" viewBox="0 0 10.8 10.8"><path d="M5.4 0.4V10.4M0.4 5.4H10.4" stroke="#e2e3e6" stroke-width="1.3" fill="none"/></svg>
<svg x="673.9" y="396.8" width="11.8" height="12.8" viewBox="0 0 11 12"><g fill="none" stroke="#e2e3e6"><path d="M0.8 2.6H10.2" stroke-width="1.3"/><path d="M3.6 2.2V1.2H7.4V2.2" stroke-width="1.1"/><path d="M2 3.2V9.6Q2 11 3.4 11H7.6Q9 11 9 9.6V3.2" stroke-width="1.3"/><path d="M4.6 4.6V9.2M6.4 4.6V9.2" stroke-width="0.9" stroke-opacity="0.75"/></g></svg>
<svg x="699.6" y="396.7" width="4" height="12.8" viewBox="0 0 4 12.8"><g fill="#e2e3e6"><rect x="0.7" y="0.7" width="2.6" height="2.6" rx="0.4"/><rect x="0.7" y="5.1000000000000005" width="2.6" height="2.6" rx="0.4"/><rect x="0.7" y="9.5" width="2.6" height="2.6" rx="0.4"/></g></svg>
<rect x="723.5" y="339.8" width="112.6" height="24.3" rx="4" fill="#3c404d"/>
<rect x="723.5" y="367.2" width="85.3" height="23.6" rx="4" fill="#284cb8"/>
<rect x="812" y="367.2" width="24.1" height="23.6" rx="4" fill="#3c404d"/>
<rect x="819.1" y="373.5" width="3.9" height="10.6" fill="#ffffff"/>
<rect x="825.2" y="373.5" width="3.9" height="10.6" fill="#ffffff"/>
<rect x="723.5" y="393.8" width="85.3" height="24.3" rx="4" fill="#3c404d"/>
<rect x="812" y="393.8" width="24.1" height="24.3" rx="4" fill="#3c404d"/>
<svg x="818.4" y="400.3" width="11.4" height="11.4" viewBox="0 0 16 16"><path fill="#ffffff" fill-rule="evenodd" d="M6.9 0.6h2.2l.35 1.75a5.8 5.8 0 0 1 1.45.6l1.5-1 1.55 1.55-1 1.5c.26.45.47.94.6 1.45l1.75.35v2.2l-1.75.35a5.8 5.8 0 0 1-.6 1.45l1 1.5-1.55 1.55-1.5-1c-.45.26-.94.47-1.45.6L9.1 15.4H6.9l-.35-1.75a5.8 5.8 0 0 1-1.45-.6l-1.5 1-1.55-1.55 1-1.5a5.8 5.8 0 0 1-.6-1.45L.7 9.1V6.9l1.75-.35c.13-.51.34-1 .6-1.45l-1-1.5L3.6 2.05l1.5 1c.45-.26.94-.47 1.45-.6Z M8 4.9a3.1 3.1 0 1 0 0 6.2 3.1 3.1 0 0 0 0-6.2Z"/></svg>
<rect x="723.5" y="421" width="112.6" height="24" rx="4" fill="#3c404d"/>
<rect x="723.5" y="448" width="112.6" height="24.2" rx="4" fill="#3c404d"/>
<rect x="182" y="480.8" width="660" height="23.2" fill="#272a33"/>
<rect x="182" y="480.8" width="660" height="1" fill="#2c2f39"/>
<rect x="518.4" y="481.5" width="0.8" height="22" fill="#30333d"/>
<rect x="542.1" y="481.5" width="0.8" height="22" fill="#30333d"/>
<rect x="609" y="481.5" width="0.8" height="22" fill="#30333d"/>
<rect x="675.2" y="481.5" width="0.8" height="22" fill="#30333d"/>
<rect x="732.6" y="481.5" width="0.8" height="22" fill="#30333d"/>
<svg x="524.4" y="486.5" width="12" height="12" viewBox="0 0 12 12"><g fill="#6f6f68"><rect x="0.6" y="8.2" width="1.7" height="3.2"/><rect x="3.6" y="6" width="1.7" height="5.4"/><rect x="6.6" y="3.4" width="1.7" height="8"/><rect x="9.6" y="0.8" width="1.5" height="10.6" fill="#626259"/></g></svg>
<svg x="547.6" y="487" width="12.4" height="11" viewBox="0 0 12.4 11"><g fill="none" stroke="#5a5d66" stroke-width="0.9"><circle cx="6.2" cy="5.5" r="1.5" fill="#8d9099" stroke="none"/><path d="M3.7 3Q2.2 5.5 3.7 8M8.7 3Q10.2 5.5 8.7 8"/><path d="M2 1.6Q-0.2 5.5 2 9.4M10.4 1.6Q12.6 5.5 10.4 9.4" stroke-opacity="0.7"/></g></svg>
<svg x="614.6" y="486.5" width="12" height="12" viewBox="0 0 12 12"><circle cx="6" cy="6" r="5.5" fill="#cb1212"/></svg>
<svg x="832" y="494" width="10" height="10" viewBox="0 0 10 10"><g fill="#9a9a92"><rect x="7" y="1" width="1.4" height="1.4"/><rect x="4.6" y="3.6" width="1.4" height="1.4"/><rect x="7" y="3.6" width="1.4" height="1.4"/><rect x="2.2" y="6.2" width="1.4" height="1.4"/><rect x="4.6" y="6.2" width="1.4" height="1.4"/><rect x="7" y="6.2" width="1.4" height="1.4"/></g></svg>
<text y="49" font-size="9.5" fill="#44454a" stroke="#44454a" stroke-width="0.11"><tspan x="203.60" textLength="42.40" lengthAdjust="spacingAndGlyphs">OBS 31.1.2</tspan><tspan x="246.00" textLength="4.00" lengthAdjust="spacingAndGlyphs"> </tspan><tspan x="250.00" textLength="3.00" lengthAdjust="spacingAndGlyphs">-</tspan><tspan x="253.00" textLength="2.40" lengthAdjust="spacingAndGlyphs"> </tspan><tspan x="255.40" textLength="40.40" lengthAdjust="spacingAndGlyphs">プロファイル:</tspan><tspan x="295.80" textLength="2.80" lengthAdjust="spacingAndGlyphs"> </tspan><tspan x="298.60" textLength="16.80" lengthAdjust="spacingAndGlyphs">無題</tspan><tspan x="315.40" textLength="3.40" lengthAdjust="spacingAndGlyphs"> </tspan><tspan x="318.80" textLength="3.00" lengthAdjust="spacingAndGlyphs">-</tspan><tspan x="321.80" textLength="3.00" lengthAdjust="spacingAndGlyphs"> </tspan><tspan x="324.80" textLength="22.40" lengthAdjust="spacingAndGlyphs">シーン:</tspan><tspan x="347.20" textLength="1.60" lengthAdjust="spacingAndGlyphs"> </tspan><tspan x="348.80" textLength="17.40" lengthAdjust="spacingAndGlyphs">無題</tspan></text>
<text y="72" font-size="10.2" fill="#e0e1e5" stroke="#e0e1e5" stroke-width="0.20"><tspan x="187.80" textLength="27.51" lengthAdjust="spacingAndGlyphs" font-size="11.02">ファイル</tspan><tspan x="215.31" textLength="11.91" lengthAdjust="spacingAndGlyphs">(F)</tspan></text>
<text y="72" font-size="10.2" fill="#e0e1e5" stroke="#e0e1e5" stroke-width="0.20"><tspan x="238.78" textLength="18.35" lengthAdjust="spacingAndGlyphs" font-size="9.59">編集</tspan><tspan x="257.13" textLength="12.49" lengthAdjust="spacingAndGlyphs">(E)</tspan></text>
<text y="72" font-size="10.2" fill="#e0e1e5" stroke="#e0e1e5" stroke-width="0.20"><tspan x="281.00" textLength="19.05" lengthAdjust="spacingAndGlyphs" font-size="9.59">表示</tspan><tspan x="300.05" textLength="12.97" lengthAdjust="spacingAndGlyphs">(V)</tspan></text>
<text y="72" font-size="10.2" fill="#e0e1e5" stroke="#e0e1e5" stroke-width="0.20"><tspan x="321.88" textLength="21.72" lengthAdjust="spacingAndGlyphs" font-size="11.02">ドック</tspan><tspan x="343.60" textLength="13.63" lengthAdjust="spacingAndGlyphs">(D)</tspan></text>
<text y="72" font-size="10.2" fill="#7b7e89" stroke="#7b7e89" stroke-width="0.15"><tspan x="368.59" textLength="40.73" lengthAdjust="spacingAndGlyphs" font-size="11.02">プロファイル</tspan><tspan x="409.32" textLength="12.28" lengthAdjust="spacingAndGlyphs">(P)</tspan></text>
<text y="72" font-size="10.2" fill="#e0e1e5" stroke="#e0e1e5" stroke-width="0.20"><tspan x="433.58" textLength="62.75" lengthAdjust="spacingAndGlyphs" font-size="11.02">シーンコレクション</tspan><tspan x="496.33" textLength="12.68" lengthAdjust="spacingAndGlyphs">(S)</tspan></text>
<text y="72" font-size="10.2" fill="#e0e1e5" stroke="#e0e1e5" stroke-width="0.20"><tspan x="520.00" textLength="20.94" lengthAdjust="spacingAndGlyphs" font-size="11.02">ツール</tspan><tspan x="540.94" textLength="12.08" lengthAdjust="spacingAndGlyphs">(T)</tspan></text>
<text y="72" font-size="10.2" fill="#e0e1e5" stroke="#e0e1e5" stroke-width="0.20"><tspan x="565.00" textLength="22.12" lengthAdjust="spacingAndGlyphs" font-size="11.02">ヘルプ</tspan><tspan x="587.12" textLength="13.88" lengthAdjust="spacingAndGlyphs">(H)</tspan></text>
<text y="274" font-size="8.8" fill="#9da0aa" stroke="#9da0aa" stroke-width="0.13"><tspan x="209.00" textLength="16.00" lengthAdjust="spacingAndGlyphs">45%</tspan></text>
<text y="274" font-size="8.8" fill="#9da0aa" stroke="#9da0aa" stroke-width="0.13"><tspan x="255.00" textLength="24.64" lengthAdjust="spacingAndGlyphs" font-size="9.50">スケール</tspan><tspan x="279.64" textLength="2.33" lengthAdjust="spacingAndGlyphs"> </tspan><tspan x="281.97" textLength="37.64" lengthAdjust="spacingAndGlyphs">(330x220)</tspan></text>
<text y="300" font-size="10.2" fill="#eeeff2" stroke="#eeeff2" stroke-width="0.20"><tspan x="188.99" textLength="29.75" lengthAdjust="spacingAndGlyphs" font-size="11.02">ソースが</tspan><tspan x="218.74" textLength="20.01" lengthAdjust="spacingAndGlyphs" font-size="9.59">選択</tspan><tspan x="238.75" textLength="52.26" lengthAdjust="spacingAndGlyphs" font-size="11.02">されていません</tspan></text>
<text y="300" font-size="10.2" fill="#b9bbc3" stroke="#b9bbc3" stroke-width="0.20"><tspan x="365.76" textLength="35.51" lengthAdjust="spacingAndGlyphs" font-size="11.02">プロパティ</tspan></text>
<text y="300" font-size="10.2" fill="#b9bbc3" stroke="#b9bbc3" stroke-width="0.20"><tspan x="438.93" textLength="29.52" lengthAdjust="spacingAndGlyphs" font-size="11.02">フィルタ</tspan></text>
<text y="330" font-size="10.2" fill="#f2f3f5" stroke="#f2f3f5" stroke-width="0.20"><tspan x="187.37" textLength="22.63" lengthAdjust="spacingAndGlyphs" font-size="11.02">シーン</tspan></text>
<text y="330" font-size="10.2" fill="#f2f3f5" stroke="#f2f3f5" stroke-width="0.20"><tspan x="304.75" textLength="22.28" lengthAdjust="spacingAndGlyphs" font-size="11.02">ソース</tspan></text>
<text y="330" font-size="10.2" fill="#f2f3f5" stroke="#f2f3f5" stroke-width="0.20"><tspan x="422.98" textLength="18.85" lengthAdjust="spacingAndGlyphs" font-size="9.59">音声</tspan><tspan x="441.83" textLength="28.39" lengthAdjust="spacingAndGlyphs" font-size="11.02">ミキサー</tspan></text>
<text y="330" font-size="10.2" fill="#f2f3f5" stroke="#f2f3f5" stroke-width="0.20"><tspan x="591.99" textLength="72.01" lengthAdjust="spacingAndGlyphs" font-size="11.02">シーントランジション</tspan></text>
<text y="330" font-size="10.2" fill="#f2f3f5" stroke="#f2f3f5" stroke-width="0.20"><tspan x="723.58" textLength="43.64" lengthAdjust="spacingAndGlyphs" font-size="11.02">コントロール</tspan></text>
<text y="352" font-size="10.2" fill="#f4f5f8" stroke="#f4f5f8" stroke-width="0.20"><tspan x="191.00" textLength="20.22" lengthAdjust="spacingAndGlyphs" font-size="11.02">シーン</tspan></text>
<svg x="322.40" y="340" width="46.80" height="18" viewBox="322.40 340 46.80 18"><text y="352" font-size="10.2" fill="#dfe0e4" stroke="#dfe0e4" stroke-width="0.20"><tspan x="324.40" textLength="37.92" lengthAdjust="spacingAndGlyphs" font-size="9.59">音声入力</tspan><tspan x="362.32" textLength="35.63" lengthAdjust="spacingAndGlyphs" font-size="11.02">キャプチャ</tspan></text></svg>
<svg x="322.40" y="362" width="46.80" height="18" viewBox="322.40 362 46.80 18"><text y="374" font-size="10.2" fill="#dfe0e4" stroke="#dfe0e4" stroke-width="0.20"><tspan x="324.40" textLength="37.92" lengthAdjust="spacingAndGlyphs" font-size="9.59">音声入力</tspan><tspan x="362.32" textLength="35.63" lengthAdjust="spacingAndGlyphs" font-size="11.02">キャプチャ</tspan><tspan x="397.95" textLength="2.70" lengthAdjust="spacingAndGlyphs"> </tspan><tspan x="400.65" textLength="5.39" lengthAdjust="spacingAndGlyphs">2</tspan></text></svg>
<svg x="322.60" y="385" width="46.60" height="18" viewBox="322.60 385 46.60 18"><text y="397" font-size="10.2" fill="#dfe0e4" stroke="#dfe0e4" stroke-width="0.20"><tspan x="324.60" textLength="16.66" lengthAdjust="spacingAndGlyphs">VLC</tspan><tspan x="341.26" textLength="2.13" lengthAdjust="spacingAndGlyphs"> </tspan><tspan x="343.39" textLength="42.48" lengthAdjust="spacingAndGlyphs" font-size="11.02">ビデオソース</tspan></text></svg>
<svg x="322.40" y="407" width="46.80" height="18" viewBox="322.40 407 46.80 18"><text y="419" font-size="10.2" fill="#dfe0e4" stroke="#dfe0e4" stroke-width="0.20"><tspan x="324.40" textLength="18.97" lengthAdjust="spacingAndGlyphs" font-size="9.59">映像</tspan><tspan x="343.37" textLength="63.97" lengthAdjust="spacingAndGlyphs" font-size="11.02">キャプチャデバイス</tspan></text></svg>
<svg x="322.40" y="430" width="46.80" height="18" viewBox="322.40 430 46.80 18"><text y="442" font-size="10.2" fill="#dfe0e4" stroke="#dfe0e4" stroke-width="0.20"><tspan x="324.40" textLength="18.97" lengthAdjust="spacingAndGlyphs" font-size="9.59">映像</tspan><tspan x="343.37" textLength="63.97" lengthAdjust="spacingAndGlyphs" font-size="11.02">キャプチャデバイス</tspan><tspan x="407.34" textLength="2.70" lengthAdjust="spacingAndGlyphs"> </tspan><tspan x="410.04" textLength="5.39" lengthAdjust="spacingAndGlyphs">2</tspan></text></svg>
<text y="348" font-size="10.2" fill="#eeeff2" stroke="#eeeff2" stroke-width="0.20"><tspan x="424.80" textLength="14.33" lengthAdjust="spacingAndGlyphs">VLC</tspan><tspan x="439.14" textLength="1.93" lengthAdjust="spacingAndGlyphs"> </tspan><tspan x="441.07" textLength="36.13" lengthAdjust="spacingAndGlyphs">ビデオソース</tspan></text>
<text y="349" font-size="10.2" fill="#868995" stroke="#868995" stroke-width="0.10"><tspan x="539.60" textLength="13.70" lengthAdjust="spacingAndGlyphs">0.0</tspan><tspan x="553.30" textLength="2.50" lengthAdjust="spacingAndGlyphs"> </tspan><tspan x="555.80" textLength="11.90" lengthAdjust="spacingAndGlyphs">dB</tspan></text>
<text y="372" font-size="6.4" fill="#c9cbd0" stroke="#c9cbd0" stroke-width="0.06"><tspan x="442.56" textLength="8.44" lengthAdjust="spacingAndGlyphs">-60</tspan></text>
<text y="372" font-size="6.4" fill="#c9cbd0" stroke="#c9cbd0" stroke-width="0.06"><tspan x="451.76" textLength="8.44" lengthAdjust="spacingAndGlyphs">-55</tspan></text>
<text y="372" font-size="6.4" fill="#c9cbd0" stroke="#c9cbd0" stroke-width="0.06"><tspan x="461.35" textLength="8.44" lengthAdjust="spacingAndGlyphs">-50</tspan></text>
<text y="372" font-size="6.4" fill="#c9cbd0" stroke="#c9cbd0" stroke-width="0.06"><tspan x="471.99" textLength="8.44" lengthAdjust="spacingAndGlyphs">-45</tspan></text>
<text y="372" font-size="6.4" fill="#c9cbd0" stroke="#c9cbd0" stroke-width="0.06"><tspan x="481.60" textLength="8.44" lengthAdjust="spacingAndGlyphs">-40</tspan></text>
<text y="372" font-size="6.4" fill="#c9cbd0" stroke="#c9cbd0" stroke-width="0.06"><tspan x="492.20" textLength="8.44" lengthAdjust="spacingAndGlyphs">-35</tspan></text>
<text y="372" font-size="6.4" fill="#c9cbd0" stroke="#c9cbd0" stroke-width="0.06"><tspan x="502.75" textLength="7.50" lengthAdjust="spacingAndGlyphs">-30</tspan></text>
<text y="372" font-size="6.4" fill="#c9cbd0" stroke="#c9cbd0" stroke-width="0.06"><tspan x="512.36" textLength="8.44" lengthAdjust="spacingAndGlyphs">-25</tspan></text>
<text y="372" font-size="6.4" fill="#c9cbd0" stroke="#c9cbd0" stroke-width="0.06"><tspan x="522.00" textLength="8.44" lengthAdjust="spacingAndGlyphs">-20</tspan></text>
<text y="372" font-size="6.4" fill="#c9cbd0" stroke="#c9cbd0" stroke-width="0.06"><tspan x="532.54" textLength="8.94" lengthAdjust="spacingAndGlyphs">-15</tspan></text>
<text y="372" font-size="6.4" fill="#c9cbd0" stroke="#c9cbd0" stroke-width="0.06"><tspan x="542.16" textLength="9.50" lengthAdjust="spacingAndGlyphs">-10</tspan></text>
<text y="372" font-size="6.4" fill="#c9cbd0" stroke="#c9cbd0" stroke-width="0.06"><tspan x="554.80" textLength="6.00" lengthAdjust="spacingAndGlyphs">-5</tspan></text>
<text y="372" font-size="6.4" fill="#c9cbd0" stroke="#c9cbd0" stroke-width="0.06"><tspan x="565.09" textLength="3.03" lengthAdjust="spacingAndGlyphs">0</tspan></text>
<text y="408" font-size="10.2" fill="#eeeff2" stroke="#eeeff2" stroke-width="0.20"><tspan x="424.79" textLength="35.65" lengthAdjust="spacingAndGlyphs">デスクトップ</tspan><tspan x="460.43" textLength="15.78" lengthAdjust="spacingAndGlyphs" font-size="9.59">音声</tspan></text>
<text y="408" font-size="10.2" fill="#868995" stroke="#868995" stroke-width="0.10"><tspan x="539.60" textLength="13.70" lengthAdjust="spacingAndGlyphs">0.0</tspan><tspan x="553.30" textLength="2.50" lengthAdjust="spacingAndGlyphs"> </tspan><tspan x="555.80" textLength="11.90" lengthAdjust="spacingAndGlyphs">dB</tspan></text>
<text y="431" font-size="6.4" fill="#c9cbd0" stroke="#c9cbd0" stroke-width="0.06"><tspan x="442.56" textLength="8.44" lengthAdjust="spacingAndGlyphs">-60</tspan></text>
<text y="431" font-size="6.4" fill="#c9cbd0" stroke="#c9cbd0" stroke-width="0.06"><tspan x="451.76" textLength="8.44" lengthAdjust="spacingAndGlyphs">-55</tspan></text>
<text y="431" font-size="6.4" fill="#c9cbd0" stroke="#c9cbd0" stroke-width="0.06"><tspan x="461.35" textLength="8.44" lengthAdjust="spacingAndGlyphs">-50</tspan></text>
<text y="431" font-size="6.4" fill="#c9cbd0" stroke="#c9cbd0" stroke-width="0.06"><tspan x="471.99" textLength="8.44" lengthAdjust="spacingAndGlyphs">-45</tspan></text>
<text y="431" font-size="6.4" fill="#c9cbd0" stroke="#c9cbd0" stroke-width="0.06"><tspan x="481.60" textLength="8.44" lengthAdjust="spacingAndGlyphs">-40</tspan></text>
<text y="431" font-size="6.4" fill="#c9cbd0" stroke="#c9cbd0" stroke-width="0.06"><tspan x="492.20" textLength="8.44" lengthAdjust="spacingAndGlyphs">-35</tspan></text>
<text y="431" font-size="6.4" fill="#c9cbd0" stroke="#c9cbd0" stroke-width="0.06"><tspan x="502.75" textLength="7.50" lengthAdjust="spacingAndGlyphs">-30</tspan></text>
<text y="431" font-size="6.4" fill="#c9cbd0" stroke="#c9cbd0" stroke-width="0.06"><tspan x="512.36" textLength="8.44" lengthAdjust="spacingAndGlyphs">-25</tspan></text>
<text y="431" font-size="6.4" fill="#c9cbd0" stroke="#c9cbd0" stroke-width="0.06"><tspan x="522.00" textLength="8.44" lengthAdjust="spacingAndGlyphs">-20</tspan></text>
<text y="431" font-size="6.4" fill="#c9cbd0" stroke="#c9cbd0" stroke-width="0.06"><tspan x="532.54" textLength="8.94" lengthAdjust="spacingAndGlyphs">-15</tspan></text>
<text y="431" font-size="6.4" fill="#c9cbd0" stroke="#c9cbd0" stroke-width="0.06"><tspan x="542.16" textLength="9.50" lengthAdjust="spacingAndGlyphs">-10</tspan></text>
<text y="431" font-size="6.4" fill="#c9cbd0" stroke="#c9cbd0" stroke-width="0.06"><tspan x="554.80" textLength="6.00" lengthAdjust="spacingAndGlyphs">-5</tspan></text>
<text y="431" font-size="6.4" fill="#c9cbd0" stroke="#c9cbd0" stroke-width="0.06"><tspan x="565.09" textLength="3.03" lengthAdjust="spacingAndGlyphs">0</tspan></text>
<text y="356" font-size="10.2" fill="#eeeff2" stroke="#eeeff2" stroke-width="0.20"><tspan x="596.59" textLength="26.64" lengthAdjust="spacingAndGlyphs" font-size="11.02">フェード</tspan></text>
<text y="383" font-size="10.2" fill="#eeeff2" stroke="#eeeff2" stroke-width="0.20"><tspan x="590.00" textLength="19.00" lengthAdjust="spacingAndGlyphs" font-size="9.59">期間</tspan></text>
<text y="383" font-size="10.2" fill="#eeeff2" stroke="#eeeff2" stroke-width="0.20"><tspan x="623.30" textLength="17.30" lengthAdjust="spacingAndGlyphs">300</tspan><tspan x="640.60" textLength="2.70" lengthAdjust="spacingAndGlyphs"> </tspan><tspan x="643.30" textLength="13.50" lengthAdjust="spacingAndGlyphs">ms</tspan></text>
<text y="355" font-size="10.2" fill="#eeeff2" stroke="#eeeff2" stroke-width="0.20"><tspan x="760.80" textLength="38.40" lengthAdjust="spacingAndGlyphs" font-size="9.59">配信開始</tspan></text>
<text y="382" font-size="10.2" fill="#f4f6fb" stroke="#f4f6fb" stroke-width="0.20"><tspan x="747.00" textLength="39.03" lengthAdjust="spacingAndGlyphs" font-size="9.59">録画終了</tspan></text>
<text y="410" font-size="10.2" fill="#eeeff2" stroke="#eeeff2" stroke-width="0.20"><tspan x="736.39" textLength="19.11" lengthAdjust="spacingAndGlyphs" font-size="9.59">仮想</tspan><tspan x="755.50" textLength="21.59" lengthAdjust="spacingAndGlyphs" font-size="11.02">カメラ</tspan><tspan x="777.10" textLength="19.11" lengthAdjust="spacingAndGlyphs" font-size="9.59">開始</tspan></text>
<text y="437" font-size="10.2" fill="#eeeff2" stroke="#eeeff2" stroke-width="0.20"><tspan x="753.39" textLength="52.23" lengthAdjust="spacingAndGlyphs" font-size="11.02">スタジオモード</tspan></text>
<text y="464" font-size="10.2" fill="#eeeff2" stroke="#eeeff2" stroke-width="0.20"><tspan x="770.00" textLength="19.22" lengthAdjust="spacingAndGlyphs" font-size="9.59">設定</tspan></text>
<text y="496" font-size="10.2" fill="#7f828d" stroke="#7f828d" stroke-width="0.10"><tspan x="565.20" textLength="38.03" lengthAdjust="spacingAndGlyphs">00:00:00</tspan></text>
<text y="496" font-size="10.2" fill="#e4e5e8" stroke="#e4e5e8" stroke-width="0.20"><tspan x="631.18" textLength="38.43" lengthAdjust="spacingAndGlyphs">00:00:42</tspan></text>
<text y="496" font-size="10.2" fill="#e4e5e8" stroke="#e4e5e8" stroke-width="0.20"><tspan x="681.70" textLength="20.90" lengthAdjust="spacingAndGlyphs">CPU:</tspan><tspan x="702.60" textLength="4.10" lengthAdjust="spacingAndGlyphs"> </tspan><tspan x="706.70" textLength="21.00" lengthAdjust="spacingAndGlyphs">1.5%</tspan></text>
<text y="496" font-size="10.2" fill="#e4e5e8" stroke="#e4e5e8" stroke-width="0.20"><tspan x="739.20" textLength="24.70" lengthAdjust="spacingAndGlyphs">29.97</tspan><tspan x="763.90" textLength="2.40" lengthAdjust="spacingAndGlyphs"> </tspan><tspan x="766.30" textLength="3.00" lengthAdjust="spacingAndGlyphs">/</tspan><tspan x="769.30" textLength="3.00" lengthAdjust="spacingAndGlyphs"> </tspan><tspan x="772.30" textLength="24.10" lengthAdjust="spacingAndGlyphs">29.97</tspan><tspan x="796.40" textLength="3.40" lengthAdjust="spacingAndGlyphs"> </tspan><tspan x="799.80" textLength="16.70" lengthAdjust="spacingAndGlyphs">FPS</tspan></text>
</svg>
</body></html>
